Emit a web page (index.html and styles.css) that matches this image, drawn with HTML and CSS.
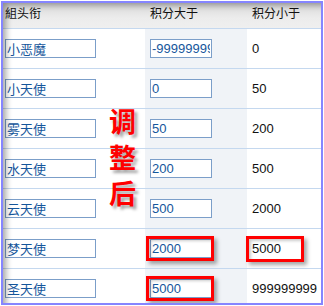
FILE: index.html
```html
<!DOCTYPE html>
<html>
<head>
    <title>组头衔设置</title>
    <meta charset="utf-8">
    <link rel="stylesheet" href="styles.css">
</head>
<body>
    <div class="frame">
        <div class="row head">
            <div class="cell">組头衔</div>
            <div class="cell mid">积分大于</div>
            <div class="cell last">积分小于</div>
        </div>
        <div class="row">
            <div class="cell"><input class="name" value="小恶魔"></div>
            <div class="cell mid"><input class="num" value="-999999999"></div>
            <div class="cell last">0</div>
        </div>
        <div class="row">
            <div class="cell"><input class="name" value="小天使"></div>
            <div class="cell mid"><input class="num" value="0"></div>
            <div class="cell last">50</div>
        </div>
        <div class="row">
            <div class="cell"><input class="name" value="雾天使"></div>
            <div class="cell mid"><input class="num" value="50"></div>
            <div class="cell last">200</div>
        </div>
        <div class="row">
            <div class="cell"><input class="name" value="水天使"></div>
            <div class="cell mid"><input class="num" value="200"></div>
            <div class="cell last">500</div>
        </div>
        <div class="row">
            <div class="cell"><input class="name" value="云天使"></div>
            <div class="cell mid"><input class="num" value="500"></div>
            <div class="cell last">2000</div>
        </div>
        <div class="row">
            <div class="cell"><input class="name" value="梦天使"></div>
            <div class="cell mid"><input class="num" value="2000"></div>
            <div class="cell last">5000</div>
        </div>
        <div class="row">
            <div class="cell"><input class="name" value="圣天使"></div>
            <div class="cell mid"><input class="num" value="5000"></div>
            <div class="cell last">999999999</div>
        </div>

        <!-- 标注 -->
        <div class="note">调<br>整<br>后</div>
        <div class="mark mark-a"></div>
        <div class="mark mark-b"></div>
        <div class="mark mark-c"></div>
    </div>
</body>
</html>
```

FILE: styles.css
```css
body {
    margin: 0;
    background: #fff;
    font-family: "Liberation Sans", "Noto Sans CJK SC", sans-serif;
    font-size: 13px;
}

.frame {
    position: relative;
    margin: 1px;
    width: 318px;
    height: 300px;
    border: 2px solid #8585ff;
    overflow: hidden;
    background: #fff;
}
/* 边框内侧阴影 */
.frame::after {
    content: '';
    position: absolute;
    left: 0;
    top: 0;
    right: 0;
    bottom: 0;
    box-shadow: inset 5px 4px 6px -2px rgba(0,0,0,0.35);
    pointer-events: none;
}

.row {
    display: grid;
    grid-template-columns: 142px 102px 74px;
    height: 40px;
    box-sizing: border-box;
    border-bottom: 1px solid #c4d8ef;
}
.row.head {
    height: 26px;
    background: linear-gradient(#d8d8d8, #ececec 60%, #efefef);
    color: #333;
    font-family: "Noto Sans CJK SC", sans-serif;
    font-size: 12px;
}

.cell {
    display: flex;
    align-items: center;
    padding-left: 2px;
    color: #111;
}
.cell.mid {
    padding-left: 5px;
    background: #f0f3f7;
}
.cell.last {
    padding-left: 5px;
}
.head .cell {
    align-items: flex-start;
    padding-top: 1px;
    background: none;
}

input {
    box-sizing: border-box;
    height: 19px;
    margin: 0;
    padding: 0 1px;
    border: 1px solid #7b9ec9;
    background: #fff;
    color: #15569b;
    font-family: "Liberation Sans", "Noto Sans CJK SC", sans-serif;
    font-size: 13px;
    outline: none;
}
input.name {
    width: 91px;
}
input.num {
    width: 62px;
}

.note {
    position: absolute;
    left: 106px;
    top: 100px;
    color: #ff0000;
    font-family: "Noto Sans CJK SC", sans-serif;
    font-weight: bold;
    font-size: 27px;
    line-height: 36px;
    text-shadow: 3px 3px 3px rgba(0,0,0,0.35);
}

.mark {
    position: absolute;
    box-sizing: border-box;
    border: 3px solid #ff0000;
    box-shadow: 3px 3px 4px rgba(0,0,0,0.35), inset 2px 2px 3px rgba(0,0,0,0.2);
}
.mark-a {
    left: 143px;
    top: 233px;
    width: 68px;
    height: 25px;
}
.mark-b {
    left: 143px;
    top: 273px;
    width: 68px;
    height: 25px;
}
.mark-c {
    left: 243px;
    top: 233px;
    width: 58px;
    height: 26px;
}
```
